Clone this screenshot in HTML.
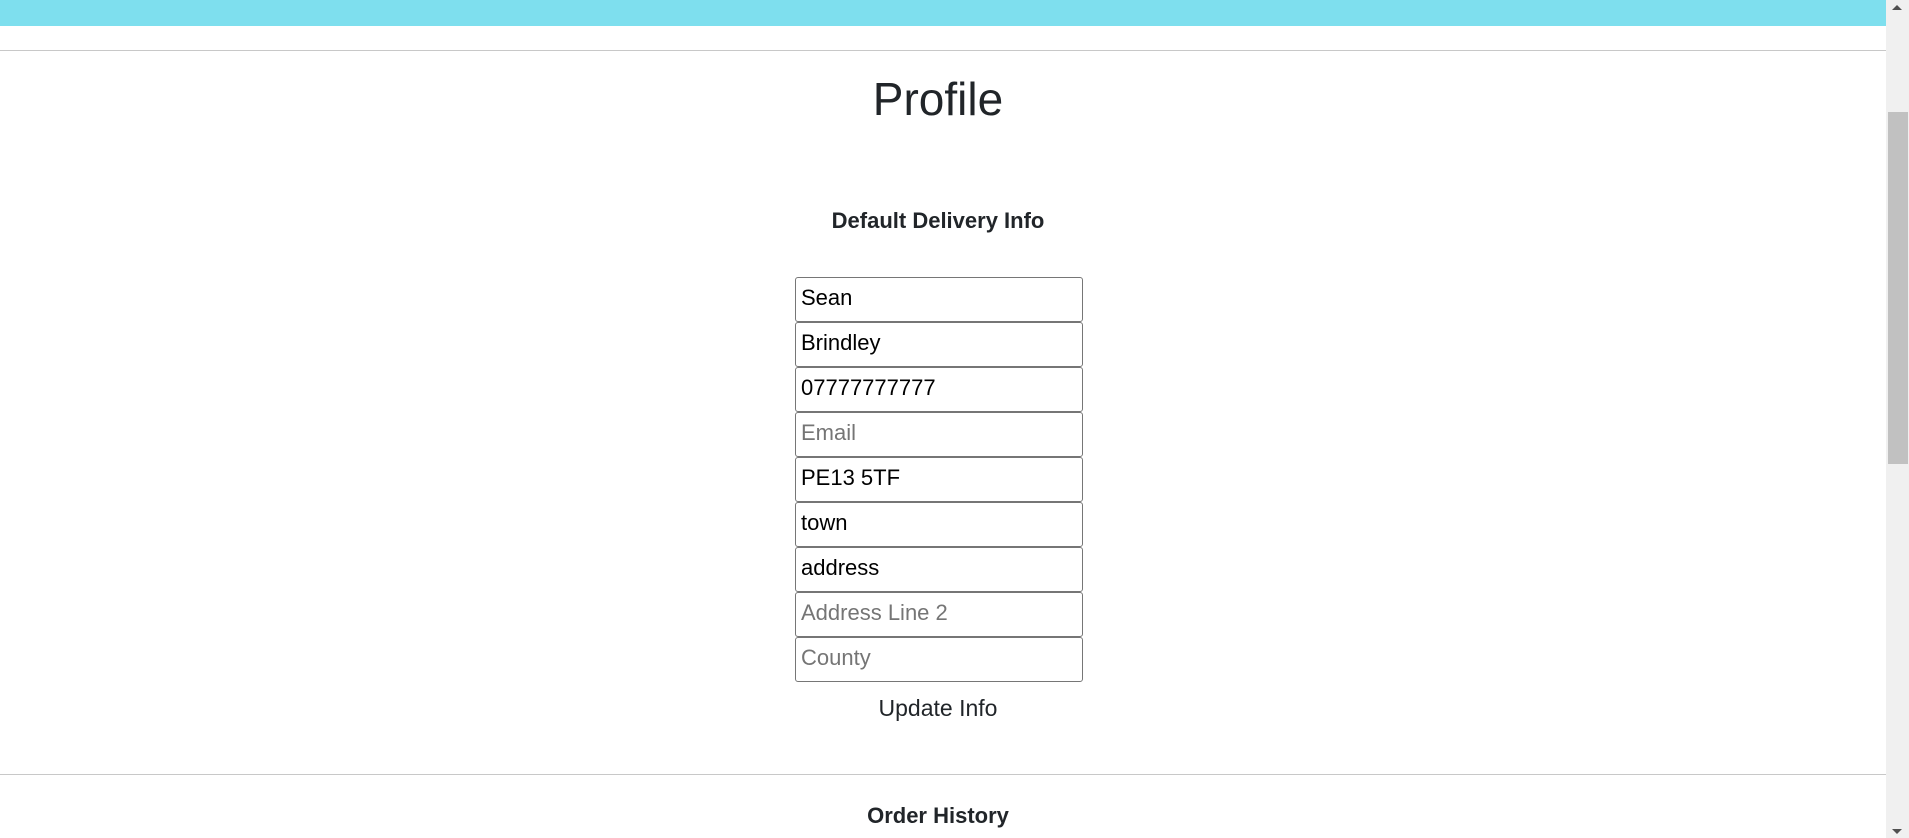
<!DOCTYPE html>
<html><head><meta charset="utf-8"><style>
html,body{margin:0;padding:0;width:1909px;height:838px;overflow:hidden;background:#fff;font-family:"Liberation Sans",sans-serif;color:#212529}
.bar{position:absolute;left:0;top:0;width:1886px;height:26px;background:#7edfee}
.hr{position:absolute;left:0;width:1886px;height:1px;background:#c8c8c8}
.c{position:absolute;left:0;width:1876px;text-align:center}
.in{position:absolute;left:795px;width:286px;height:43px;border:1px solid #767676;border-radius:3px;box-sizing:content-box}
.in span{position:absolute;left:5px;top:6px;font-size:22px;line-height:28px;color:#000}
.in span.p{color:#757575}
.sb{position:absolute;left:1886px;top:0;width:23px;height:838px;background:#f0f0f0}
.th{position:absolute;left:1888px;top:112px;width:20px;height:352px;background:#c1c1c1}
</style></head><body>
<div class="bar"></div>
<div class="hr" style="top:50px"></div>
<div class="c" style="top:71px;font-size:46px;line-height:56px">Profile</div>
<div class="c" style="top:207px;font-size:22px;font-weight:bold;line-height:28px">Default Delivery Info</div>
<div class="in" style="top:277px"><span>Sean</span></div>
<div class="in" style="top:322px"><span>Brindley</span></div>
<div class="in" style="top:367px"><span>07777777777</span></div>
<div class="in" style="top:412px"><span class="p">Email</span></div>
<div class="in" style="top:457px"><span>PE13 5TF</span></div>
<div class="in" style="top:502px"><span>town</span></div>
<div class="in" style="top:547px"><span>address</span></div>
<div class="in" style="top:592px"><span class="p">Address Line 2</span></div>
<div class="in" style="top:637px"><span class="p">County</span></div>
<div class="c" style="top:694px;font-size:23px;line-height:28px">Update Info</div>
<div class="hr" style="top:774px"></div>
<div class="c" style="top:802px;font-size:22px;font-weight:bold;line-height:28px">Order History</div>
<div class="sb"></div>
<div class="th"></div>
<svg style="position:absolute;left:1891px;top:4px" width="12" height="6"><path d="M1 6L6 1L11 6Z" fill="#505050"/></svg>
<svg style="position:absolute;left:1891px;top:829px" width="12" height="6"><path d="M1 0L6 5L11 0Z" fill="#505050"/></svg>
</body></html>
